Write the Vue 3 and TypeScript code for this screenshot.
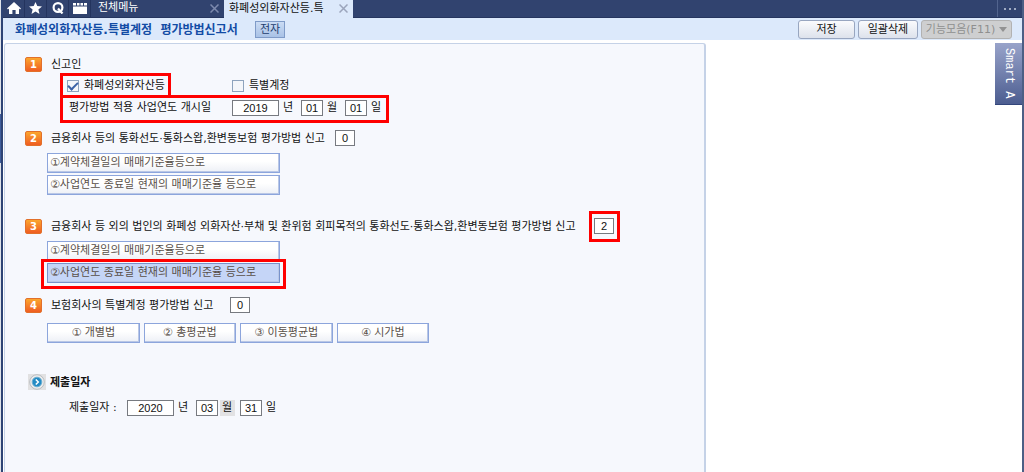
<script setup lang="ts">
import { ref } from 'vue'

const monetary = ref(true)
const special = ref(false)
const startDate = ref({ y: '2019', m: '01', d: '01' })
const submitDate = ref({ y: '2020', m: '03', d: '31' })
const financeMethod = ref('0')
const corpMethod = ref('2')
const insuranceMethod = ref('0')
const methods: string[] = ['①계약체결일의 매매기준율등으로', '②사업연도 종료일 현재의 매매기준율 등으로']
const insuranceMethods: string[] = ['① 개별법', '② 총평균법', '③ 이동평균법', '④ 시가법']
</script>

<template>
  <div class="desk">
    <div class="window">
      <header class="tabs">
        <button class="tool" aria-label="홈">
          <svg width="14" height="12" viewBox="0 0 14 12"><path d="M7 0 14 6.400 13 7.400 12 6.600V12H8.600V8H5.400v4H2V6.600L1 7.400 0 6.400Z" fill="#fff" /></svg>
        </button>
        <button class="tool" aria-label="즐겨찾기">
          <svg width="13" height="12" viewBox="0 0 13 12"><path d="M6.500 0 8.300 4.100 13 4.500 9.400 7.500 10.500 12 6.500 9.600 2.500 12 3.600 7.500 0 4.500 4.700 4.100Z" fill="#fff" /></svg>
        </button>
        <button class="tool" aria-label="검색">
          <svg width="12" height="12" viewBox="0 0 12 12"><circle cx="6" cy="5.500" r="4.400" fill="none" stroke="#fff" stroke-width="2.200" /><path d="m6 6.500 4.500 5" stroke="#fff" stroke-width="2.200" /></svg>
        </button>
        <button class="tool" aria-label="메뉴">
          <svg width="14" height="12" viewBox="0 0 14 12"><path d="M0 4.500h14V12H0ZM0 1h3v2.500H0ZM4 1h2.500v2.500H4ZM7.500 1H10v2.500H7.500ZM11 1h3v2.500h-3Z" fill="#fff" /></svg>
        </button>
        <div class="tab">
          <span>전체메뉴</span>
          <button class="close" aria-label="전체메뉴 닫기"><svg width="9" height="9" viewBox="0 0 9 9"><path d="m.5.500 8 8m0-8-8 8" stroke="#7d8aae" stroke-width="1.500" /></svg></button>
        </div>
        <div class="tab active">
          <span>화폐성외화자산등.특</span>
          <button class="close" aria-label="신고서 닫기"><svg width="9" height="9" viewBox="0 0 9 9"><path d="m.5.500 8 8m0-8-8 8" stroke="#9ba5bc" stroke-width="1.500" /></svg></button>
        </div>
        <button class="more" aria-label="더보기"><i></i><i></i><i></i></button>
      </header>

      <div class="toolbar">
        <h1>화폐성외화자산등.특별계정&nbsp; 평가방법신고서</h1>
        <button class="chip">전자</button>
        <div class="actions">
          <button class="action save">저장</button>
          <button class="action">일괄삭제</button>
          <button class="action functions" disabled>기능모음(F11) <svg width="8" height="5" viewBox="0 0 8 5"><path d="M0 0h8L4 5Z" fill="#929292" /></svg></button>
        </div>
      </div>

      <main class="body">
        <form class="panel" @submit.prevent>
          <section>
            <div class="heading"><b class="badge">1</b><h2>신고인</h2></div>
            <div class="row checks">
              <i class="mark mark-check"></i>
              <label class="first"><input v-model="monetary" type="checkbox" />화폐성외화자산등</label>
              <label><input v-model="special" type="checkbox" />특별계정</label>
            </div>
            <div class="row date">
              <i class="mark mark-date"></i>
              <label class="caption" for="start-year">평가방법 적용 사업연도 개시일</label>
              <input id="start-year" v-model="startDate.y" class="year" />
              <label class="unit" for="start-year">년</label>
              <input id="start-month" v-model="startDate.m" class="two" />
              <label class="unit" for="start-month">월</label>
              <input id="start-day" v-model="startDate.d" class="two" />
              <label class="unit" for="start-day">일</label>
            </div>
          </section>

          <section>
            <div class="heading">
              <b class="badge">2</b>
              <h2 class="finance"><label for="finance">금융회사 등의 통화선도·통화스왑,환변동보험 평가방법 신고</label></h2>
              <input id="finance" v-model="financeMethod" class="one" />
            </div>
            <div class="choices">
              <button v-for="m in methods" :key="m" type="button" class="choice">{{ m }}</button>
            </div>
          </section>

          <section class="corporate">
            <div class="heading">
              <b class="badge">3</b>
              <h2 class="corp"><label for="corp">금융회사 등 외의 법인의 화폐성 외화자산·부채 및 환위험 회피목적의 통화선도·통화스왑,환변동보험 평가방법 신고</label></h2>
              <span class="marked"><input id="corp" v-model="corpMethod" class="one" /><i class="mark mark-code"></i></span>
            </div>
            <div class="choices">
              <button v-for="(m, i) in methods" :key="m" type="button" class="choice" :class="{ selected: i === 1 }">{{ m }}</button>
              <i class="mark mark-choice"></i>
            </div>
          </section>

          <section class="insurer">
            <div class="heading">
              <b class="badge">4</b>
              <h2 class="insurance"><label for="insurance">보험회사의 특별계정 평가방법 신고</label></h2>
              <input id="insurance" v-model="insuranceMethod" class="one" />
            </div>
            <div class="choices across">
              <button v-for="m in insuranceMethods" :key="m" type="button" class="choice">{{ m }}</button>
            </div>
          </section>

          <section class="submission">
            <div class="heading">
              <svg width="18" height="16" viewBox="0 0 18 16">
                <path d="M0 0h18v16H0Z" fill="#e1e1e2" />
                <circle cx="9" cy="8" r="7.300" fill="#ececec" stroke="#b9bdc1" />
                <circle cx="9" cy="8" r="4.800" fill="#248bc4" stroke="#6aaed2" />
                <path d="m7.800 5.500 2.500 2.500-2.500 2.500" fill="none" stroke="#fff" stroke-width="1.500" />
              </svg>
              <h2>제출일자</h2>
            </div>
            <div class="row date">
              <label class="caption" for="submit-year">제출일자 :</label>
              <input id="submit-year" v-model="submitDate.y" class="year" />
              <label class="unit" for="submit-year">년</label>
              <input id="submit-month" v-model="submitDate.m" class="two" />
              <label class="unit shaded" for="submit-month">월</label>
              <input id="submit-day" v-model="submitDate.d" class="two" />
              <label class="unit" for="submit-day">일</label>
            </div>
          </section>
        </form>
        <aside><button class="smart">Smart A</button></aside>
      </main>
    </div>
  </div>
</template>

<style>
html, body { margin: 0; background: #fff; }
</style>

<style scoped>
* { box-sizing: border-box; }
.desk {
  min-height: 100vh;
  padding-left: 1px;
  background: linear-gradient(#dfe3ea 0 114px, #3f5d9b 114px 163px, #dfe3ea 163px);
  font: 11px/16px "DejaVu Sans", "Noto Sans CJK KR", sans-serif;
  color: #111;
}
button, input { font: inherit; color: inherit; margin: 0; padding: 0; border: 0; border-radius: 0; background: none; }
h1, h2 { margin: 0; font: inherit; white-space: nowrap; }
svg { display: block; flex: none; }
.window {
  min-height: 100vh;
  display: flex;
  flex-direction: column;
  background: #fff;
  border-left: 2px solid #2e4475;
  border-right: 2px solid #4c5f85;
}
.tabs { display: flex; height: 18px; background: #31436f; border-bottom: 1px solid #26365f; }
.tool { width: 22px; display: flex; align-items: center; justify-content: center; padding-bottom: 2px; border-right: 1px solid #24345e; }
.tab { width: 133px; display: flex; align-items: center; justify-content: space-between; padding: 0 4px 1px 7px; color: #fff; white-space: nowrap; }
.tab.active { width: 129px; height: 18px; padding-left: 5px; background: #dce9fb; color: #111; }
.close { width: 10px; height: 12px; display: flex; align-items: center; }
.more { width: 25px; margin-left: auto; display: flex; justify-content: center; align-items: center; gap: 3px; border-left: 1px solid #52648e; }
.more i { width: 2px; height: 2px; background: #a0abc3; }
.toolbar { display: flex; align-items: center; height: 22px; padding: 0 10px 0 12px; background: #dce9fb; }
.toolbar h1 { width: 240px; padding-top: 2px; font-size: 12px; font-weight: 700; color: #124ca5; }
.chip { width: 30px; height: 17px; line-height: 15px; border: 1px solid #7f9bc8; background: linear-gradient(#cbdcf4, #a9c2e6); color: #1d3d6f; }
.actions { display: flex; gap: 3px; margin-left: auto; }
.action { width: 60px; height: 19px; line-height: 17px; border: 1px solid #98a6c0; border-radius: 3px; background: linear-gradient(#fafbfd, #dde2ec); white-space: nowrap; }
.save { width: 57px; }
.functions { width: 91px; display: flex; align-items: center; justify-content: center; gap: 4px; border-color: #b2b2b2; background: #cecfd0; color: #8f8f8f; }
.body { flex: 1; display: flex; padding: 3px 0 0 1px; }
.panel { width: 70%; max-width: 702px; min-width: 624px; flex: none; padding: 12px 0 0 20px; background: #f6f8fd; border: solid #c5d2e7; border-width: 1px 2px 0 1px; border-radius: 3px 3px 0 0; }
aside { margin-left: auto; }
.smart { width: 27px; height: 62px; writing-mode: vertical-rl; background: linear-gradient(#98a3ca, #4c5d90); border-bottom: 1px solid #33467b; color: #fff; font: 12px/27px "Liberation Mono", monospace; }
.heading { display: flex; align-items: center; height: 16px; }
.heading h2 { padding-top: 1px; }
.badge { width: 17px; height: 15px; margin-right: 9px; border: 1px solid #e2702a; border-radius: 2px; background: linear-gradient(#fba62e, #ef5d22); color: #fff; font: bold 10px/13px "DejaVu Sans", sans-serif; text-align: center; flex: none; }
.finance { width: 284px; }
.corp { width: 543px; }
.insurance { width: 179px; }
.row { position: relative; display: flex; align-items: center; height: 22px; }
.checks { margin-top: 3px; padding-left: 42px; }
.checks label { display: flex; align-items: center; gap: 5px; white-space: nowrap; }
.first { width: 165px; }
.checks input { appearance: none; width: 12px; height: 12px; border: 1px solid #8ea3bd; background: #f4f6fa; display: grid; place-items: center; }
.checks input:checked::after { content: ""; width: 8px; height: 4px; margin-bottom: 3px; border: solid #3b62a6; border-width: 0 0 2px 2px; transform: rotate(-45deg); }
.date { padding-left: 44px; white-space: nowrap; }
.date .caption { width: 163px; }
.year, .two, .one { height: 16px; border: 1px solid #777a80; background: #fff; text-align: center; font-size: 11px; font-family: "Liberation Sans", sans-serif; line-height: 14px; }
.year { width: 47px; }
.two { width: 22px; }
.one { width: 20px; }
.unit { width: 22px; padding-left: 4px; }
section + section { margin-top: 11px; }
.choices { position: relative; display: grid; gap: 2px; width: 233px; margin: 7px 0 0 22px; }
.choice { height: 20px; line-height: 18px; padding: 0 2px; border: 1px solid #8ca5dc; box-shadow: inset -1px -1px #b9c7e6; background: linear-gradient(#fff 40%, #edf0f6); color: #595049; text-align: left; white-space: nowrap; }
.choice.selected { background: #c5d5f7; border-color: #7892cb; }
.corporate.corporate { margin-top: 23px; }
.insurer.insurer { margin-top: 14px; }
.across { width: 382px; grid-template-columns: repeat(4, 1fr); gap: 4px; margin-top: 10px; }
.across .choice { text-align: center; }
.submission.submission { margin-top: 31px; }
.submission .heading { padding-left: 3px; }
.submission h2 { font-weight: 700; margin-left: 4px; }
.submission .date { margin-top: 7px; }
.submission .caption { width: 58px; }
.shaded { background: linear-gradient(#e2e2e4, #e2e2e4) 2px 0 / 15px 16px no-repeat; }
.marked { position: relative; display: flex; }
.mark { position: absolute; border: 3px solid #f00; pointer-events: none; }
.mark-check { left: 35px; top: -2px; width: 111px; height: 25px; }
.mark-date { left: 35px; top: -2px; width: 329px; height: 28px; }
.mark-code { left: -5px; top: -7px; width: 31px; height: 31px; }
.mark-choice { left: -6px; right: -6px; bottom: -6px; height: 30px; }
</style>
